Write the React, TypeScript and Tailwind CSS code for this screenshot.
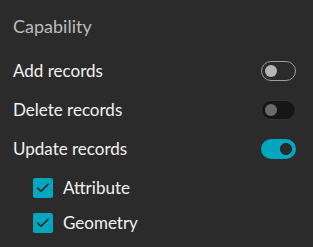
import { Check } from "lucide-react";

const toggles = [
  { label: "Add records", state: "off" },
  { label: "Delete records", state: "disabled" },
  { label: "Update records", state: "on" },
];

const checks = ["Attribute", "Geometry"];

function Toggle({ state }: { state: string }) {
  if (state === "on") {
    return (
      <div className="flex h-[20px] w-[35px] items-center justify-end rounded-full bg-[#00a7be] pr-[4px]">
        <div className="h-[12px] w-[12px] rounded-full border border-[#1c1c1c] bg-[#2b2b2b]" />
      </div>
    );
  }
  if (state === "disabled") {
    return (
      <div className="flex h-[20px] w-[35px] items-center rounded-full border border-[#333333] bg-[#161616] pl-[3px]">
        <div className="h-[12px] w-[12px] rounded-full bg-[#6a6a6a]" />
      </div>
    );
  }
  return (
    <div className="flex h-[20px] w-[35px] items-center rounded-full border border-[#9c9c9c] bg-[#2b2b2b] pl-[3px]">
      <div className="h-[12px] w-[12px] rounded-full bg-[#b4b4b4]" />
    </div>
  );
}

export default function App() {
  return (
    <div className="h-[247px] w-[313px] bg-[#2b2b2b] pl-[13px] pr-[17px] pt-[14px] font-['Lato','Open_Sans',sans-serif]">
      <div className="h-[24px] text-[18px] leading-[24px] text-[#bdbdbd]">Capability</div>
      <div className="mt-[13px]">
        {toggles.map((t) => (
          <div key={t.label} className="flex h-[39px] items-center justify-between">
            <span className="text-[17px] text-[#f2f2f2]">{t.label}</span>
            <Toggle state={t.state} />
          </div>
        ))}
      </div>
      <div className="mt-[2px] pl-[20px]">
        {checks.map((c) => (
          <div key={c} className="flex h-[35px] items-center gap-[10px]">
            <div className="flex h-[20px] w-[20px] items-center justify-center rounded-[2px] bg-[#00a7be]">
              <Check className="h-[16px] w-[16px] text-[#1f1f1f]" strokeWidth={2.25} />
            </div>
            <span className="text-[17px] text-[#f2f2f2]">{c}</span>
          </div>
        ))}
      </div>
    </div>
  );
}
